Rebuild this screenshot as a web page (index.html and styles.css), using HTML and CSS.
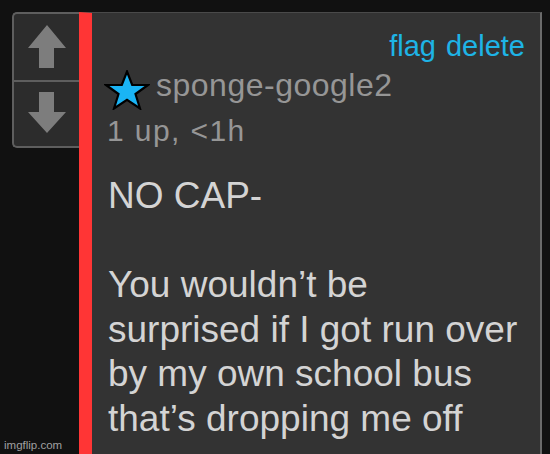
FILE: index.html
```html
<!DOCTYPE html>
<html lang="en">
<head>
  <meta charset="UTF-8">
  <meta name="viewport" content="width=device-width, initial-scale=1.0">
  <title>Comment</title>
  <link rel="stylesheet" href="styles.css">
</head>
<body>
  <div class="page">
    <div class="vote">
      <a class="vote-btn" href="javascript:;">
        <svg width="40" height="44" viewBox="0 0 40 44"><path d="M20 0 L39 23 L27 23 L27 43 L12 43 L12 23 L1 23 Z" fill="#7d7d7d"/></svg>
      </a>
      <a class="vote-btn" href="javascript:;">
        <svg width="40" height="44" viewBox="0 0 40 44"><path d="M12 0 L27 0 L27 20 L39 20 L20 41 L1 20 L12 20 Z" fill="#7d7d7d"/></svg>
      </a>
    </div>
    <div class="comment">
      <div class="actions">
        <a href="javascript:;">flag</a>
        <a href="javascript:;">delete</a>
      </div>
      <div class="user">
        <svg class="star" width="46" height="40" viewBox="0 0 46 40">
          <path d="M23 1.5 L28.2 15 L44 15 L31.5 24 L36 38.5 L23 29.8 L10 38.5 L14.5 24 L2 15 L17.8 15 Z" fill="#1ab4f5" stroke="#000" stroke-width="2.2" stroke-linejoin="miter"/>
        </svg>
        <span class="name">sponge-google2</span>
      </div>
      <p class="meta">1 up, &lt;1h</p>
      <div class="text">
        <p>NO CAP-</p>
        <p>&nbsp;</p>
        <p>You wouldn’t be surprised if I got run over by my own school bus that’s dropping me off</p>
      </div>
    </div>
  </div>
  <div class="mark">imgflip.com</div>
</body>
</html>
```

FILE: styles.css
```css
*{
  margin: 0px;
  padding: 0px;
  box-sizing: border-box;
}
html,body{
  background-color: #111111;
  height: 100%;
  overflow: hidden;
}
body{
  font-family: "Liberation Sans", Arial, sans-serif;
}
.page{
  display: flex;
  align-items: flex-start;
  padding: 12px 0 0 12px;
  height: 100%;
}
.vote{
  width: 67px;
  border: 2px solid #5e5e5e;
  border-right: none;
  border-radius: 5px 0 0 5px;
  background-color: #2c2c2c;
}
.vote-btn{
  display: flex;
  justify-content: center;
  align-items: center;
  height: 66px;
}
.vote-btn + .vote-btn{
  border-top: 2px solid #5e5e5e;
}
.comment{
  width: 463px;
  height: 100%;
  background-color: #333333;
  border-left: 13px solid #ff3535;
  border-top: 1px solid #4a4a4a;
  border-right: 2px solid #6a6a6a;
  padding: 16px 15px 0 12px;
}
.actions{
  display: flex;
  justify-content: flex-end;
  gap: 10px;
  font-size: 29px;
  line-height: 34px;
}
.actions a{
  color: #1eb4e6;
  text-decoration: none;
}
.user{
  display: flex;
  align-items: center;
  gap: 6px;
  height: 38px;
  margin-top: 3px;
}
.star{
  margin-top: 10px;
}
.name{
  font-size: 32px;
  line-height: 38px;
  color: #969696;
  letter-spacing: 0.5px;
}
.meta{
  margin-top: 12px;
  font-size: 30px;
  line-height: 30px;
  color: #969696;
  letter-spacing: 1.4px;
  padding-left: 3px;
}
.text{
  margin-top: 28px;
  padding-left: 4px;
  font-size: 37px;
  line-height: 44.5px;
  color: #d4d4d4;
}
.mark{
  position: absolute;
  left: 4px;
  bottom: 3px;
  font-size: 11.5px;
  color: #a0a0a0;
}
```
